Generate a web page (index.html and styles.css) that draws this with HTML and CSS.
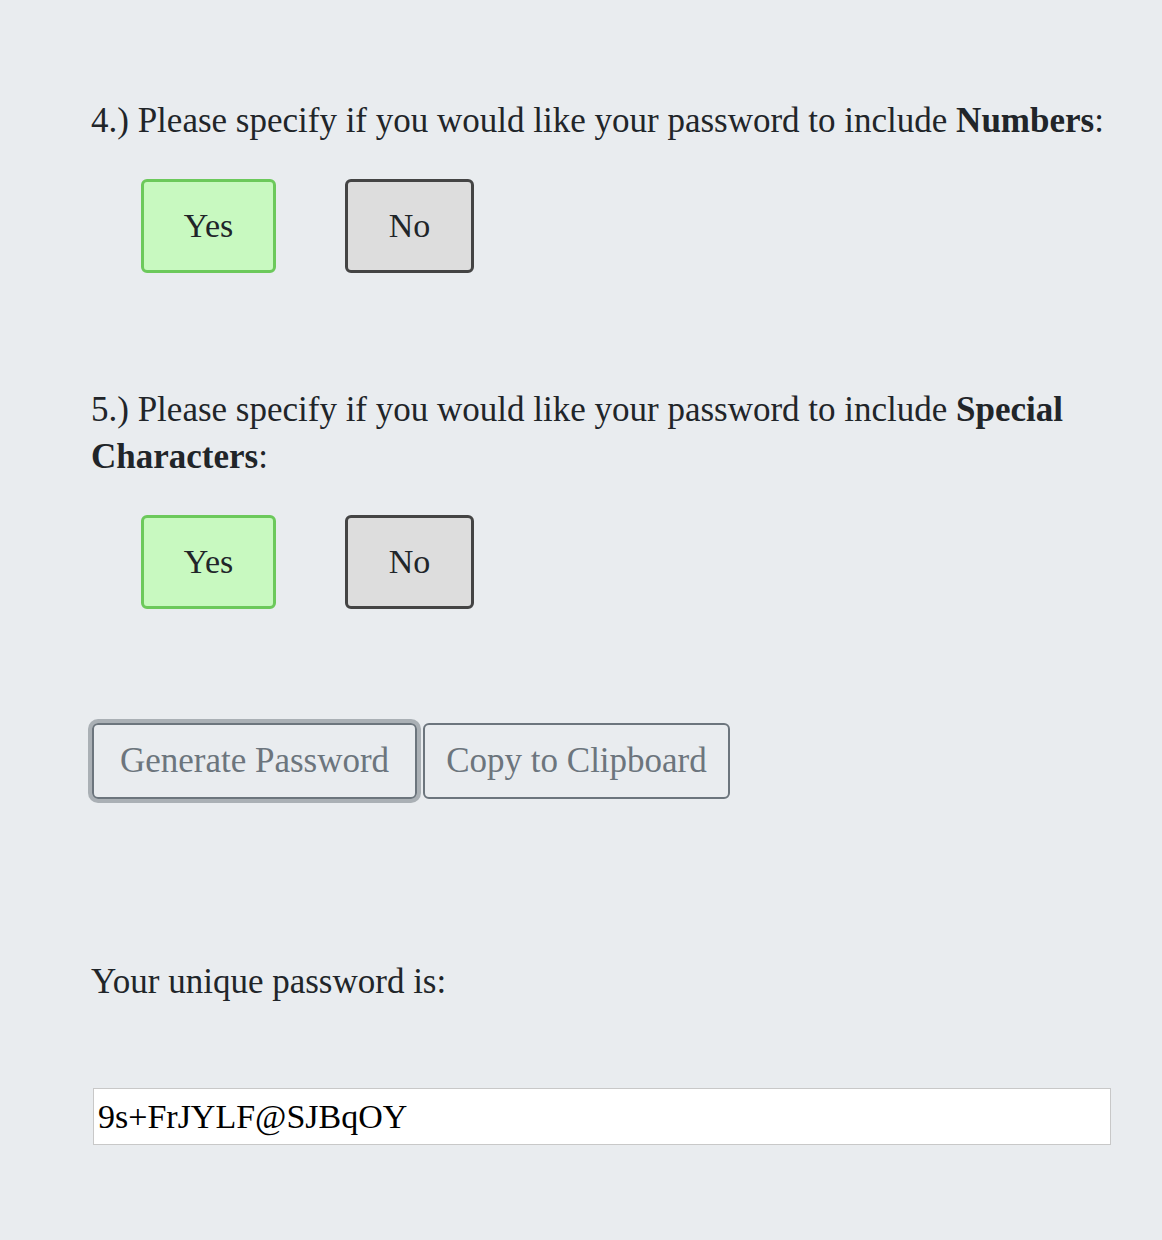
FILE: index.html
```html
<!DOCTYPE html>
<html>
<head>
<meta charset="utf-8">
<link rel="stylesheet" href="styles.css">
</head>
<body>
<main class="page">
  <section class="question q4">
    <p class="prompt">4.) Please specify if you would like your password to include <b>Numbers</b>:</p>
    <div class="choices">
      <button class="choice yes">Yes</button>
      <button class="choice no">No</button>
    </div>
  </section>
  <section class="question q5">
    <p class="prompt">5.) Please specify if you would like your password to include <b>Special</b> <b>Characters</b>:</p>
    <div class="choices">
      <button class="choice yes">Yes</button>
      <button class="choice no">No</button>
    </div>
  </section>
  <div class="actions">
    <button class="action generate focused">Generate Password</button>
    <button class="action copy">Copy to Clipboard</button>
  </div>
  <p class="result-label">Your unique password is:</p>
  <div class="result">9s+FrJYLF@SJBqOY</div>
</main>
</body>
</html>
```

FILE: styles.css
```css
html, body {
  margin: 0;
  padding: 0;
}
body {
  background: #e9ecef;
  color: #212529;
  font-family: "Liberation Serif", "DejaVu Serif", serif;
  font-size: 35px;
  line-height: 47px;
}
.page {
  padding: 97px 40px 0 91px;
}
.prompt {
  margin: 0;
}
.question b {
  font-weight: bold;
}
.choices {
  display: flex;
  gap: 69px;
  padding-left: 50px;
  margin-top: 35px;
}
.choice {
  font-family: inherit;
  font-size: 34px;
  color: #212529;
  height: 94px;
  border-radius: 6px;
  border: 3px solid;
  padding: 0;
  cursor: pointer;
}
.choice.yes {
  width: 135px;
  background: #c8f9c0;
  border-color: #6cc95b;
}
.choice.no {
  width: 129px;
  background: #dddddd;
  border-color: #444444;
}
.q5 {
  margin-top: 113px;
}
.actions {
  display: flex;
  gap: 6px;
  margin-top: 114px;
  padding-left: 1px;
}
.action {
  font-family: inherit;
  font-size: 35px;
  color: #6c757d;
  background: transparent;
  border: 2px solid #6c757d;
  border-radius: 6px;
  height: 76px;
  padding: 0;
}
.action.generate {
  width: 325px;
}
.action.copy {
  width: 307px;
}
.action.focused {
  box-shadow: 0 0 0 4px #aab0b5;
}
.result-label {
  margin: 159px 0 0 0;
}
.result {
  margin-top: 83px;
  margin-left: 2px;
  width: 1018px;
  height: 57px;
  box-sizing: border-box;
  background: #ffffff;
  border: 1px solid #c8c8c8;
  color: #000;
  font-size: 34px;
  padding: 0 0 0 4px;
  line-height: 55px;
}
```
